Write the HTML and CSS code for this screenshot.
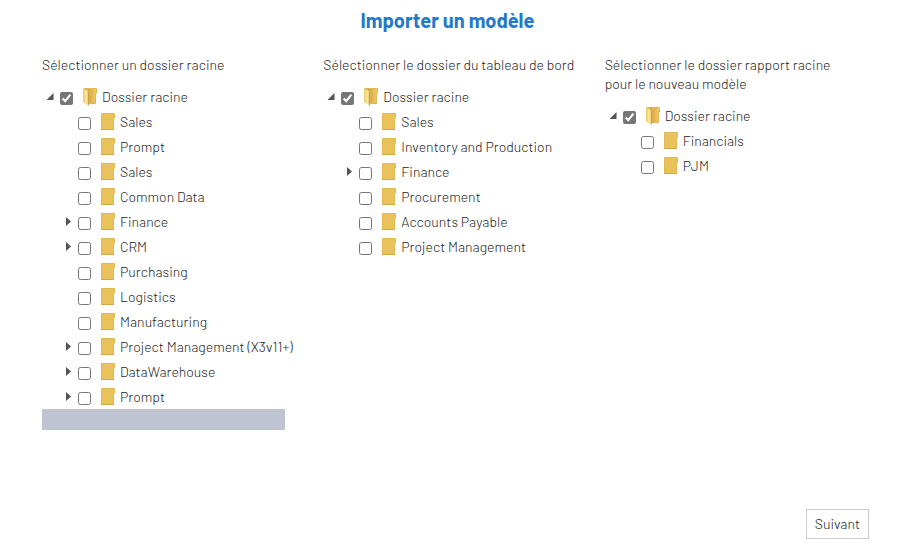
FILE: index.html
```html
<!DOCTYPE html>
<html lang="fr">
<head>
    <meta charset="UTF-8">
    <meta name="viewport" content="width=device-width, initial-scale=1.0">
    <title>Importer un modèle</title>
    <link rel="stylesheet" href="styles.css">
</head>
<body>
    <svg class="defs" width="0" height="0" aria-hidden="true">
        <defs>
            <linearGradient id="flap" x1="0" x2="1">
                <stop offset="0" stop-color="#e9c85f"/>
                <stop offset="0.6" stop-color="#fbe9a4"/>
                <stop offset="1" stop-color="#e5c35c"/>
            </linearGradient>
            <linearGradient id="back" x1="0" x2="1">
                <stop offset="0.3" stop-color="#d5a646"/>
                <stop offset="1" stop-color="#f0cd68"/>
            </linearGradient>
        </defs>
        <symbol id="folder" viewBox="0 0 14 17">
            <path d="M0.5 0.5H13.5V5L12.5 6V16.5H0.5Z" fill="#e9c25c"/>
            <path d="M0.5 16.5V0.5H13.5V5L12.5 6V16" fill="none" stroke="#e2b851"/>
            <path d="M0 16.5H13" stroke="#d3a647"/>
        </symbol>
        <symbol id="folder-open" viewBox="0 0 14 18">
            <path d="M1 0.5H13.5V5L12.5 6V15.5H3Z" fill="url(#back)" stroke="#e0b750"/>
            <path d="M0 0.5L4.5 2.5Q5.5 3 5.5 4V17.5L1 15Q0 14.5 0 13Z" fill="url(#flap)"/>
            <path d="M5.5 4V17.5" stroke="#d0a040"/>
        </symbol>
        <symbol id="expanded" viewBox="0 0 8 8">
            <path d="M7.5 0.5V7.5H0.5Z" fill="#555"/>
        </symbol>
        <symbol id="collapsed" viewBox="0 0 8 9">
            <path d="M2 0L7 4.5L2 9Z" fill="#555"/>
        </symbol>
    </svg>

    <h1>Importer un modèle</h1>

    <form class="import">
        <div class="columns">
            <section>
                <h2>Sélectionner un dossier racine</h2>
                <ul class="tree">
                    <li>
                        <div class="node">
                            <button type="button" class="toggle" aria-label="Réduire"><svg><use href="#expanded"/></svg></button>
                            <label><input type="checkbox" checked><svg class="folder open"><use href="#folder-open"/></svg>Dossier racine</label>
                        </div>
                        <ul>
                            <li class="node"><label><input type="checkbox"><svg class="folder"><use href="#folder"/></svg>Sales</label></li>
                            <li class="node"><label><input type="checkbox"><svg class="folder"><use href="#folder"/></svg>Prompt</label></li>
                            <li class="node"><label><input type="checkbox"><svg class="folder"><use href="#folder"/></svg>Sales</label></li>
                            <li class="node"><label><input type="checkbox"><svg class="folder"><use href="#folder"/></svg>Common Data</label></li>
                            <li class="node">
                                <button type="button" class="toggle" aria-label="Développer"><svg><use href="#collapsed"/></svg></button>
                                <label><input type="checkbox"><svg class="folder"><use href="#folder"/></svg>Finance</label>
                            </li>
                            <li class="node">
                                <button type="button" class="toggle" aria-label="Développer"><svg><use href="#collapsed"/></svg></button>
                                <label><input type="checkbox"><svg class="folder"><use href="#folder"/></svg>CRM</label>
                            </li>
                            <li class="node"><label><input type="checkbox"><svg class="folder"><use href="#folder"/></svg>Purchasing</label></li>
                            <li class="node"><label><input type="checkbox"><svg class="folder"><use href="#folder"/></svg>Logistics</label></li>
                            <li class="node"><label><input type="checkbox"><svg class="folder"><use href="#folder"/></svg>Manufacturing</label></li>
                            <li class="node">
                                <button type="button" class="toggle" aria-label="Développer"><svg><use href="#collapsed"/></svg></button>
                                <label><input type="checkbox"><svg class="folder"><use href="#folder"/></svg>Project Management (X3v11+)</label>
                            </li>
                            <li class="node">
                                <button type="button" class="toggle" aria-label="Développer"><svg><use href="#collapsed"/></svg></button>
                                <label><input type="checkbox"><svg class="folder"><use href="#folder"/></svg>DataWarehouse</label>
                            </li>
                            <li class="node">
                                <button type="button" class="toggle" aria-label="Développer"><svg><use href="#collapsed"/></svg></button>
                                <label><input type="checkbox"><svg class="folder"><use href="#folder"/></svg>Prompt</label>
                            </li>
                        </ul>
                    </li>
                </ul>
                <div class="scrollbar"></div>
            </section>

            <section>
                <h2>Sélectionner le dossier du tableau de bord</h2>
                <ul class="tree">
                    <li>
                        <div class="node">
                            <button type="button" class="toggle" aria-label="Réduire"><svg><use href="#expanded"/></svg></button>
                            <label><input type="checkbox" checked><svg class="folder open"><use href="#folder-open"/></svg>Dossier racine</label>
                        </div>
                        <ul>
                            <li class="node"><label><input type="checkbox"><svg class="folder"><use href="#folder"/></svg>Sales</label></li>
                            <li class="node"><label><input type="checkbox"><svg class="folder"><use href="#folder"/></svg>Inventory and Production</label></li>
                            <li class="node">
                                <button type="button" class="toggle" aria-label="Développer"><svg><use href="#collapsed"/></svg></button>
                                <label><input type="checkbox"><svg class="folder"><use href="#folder"/></svg>Finance</label>
                            </li>
                            <li class="node"><label><input type="checkbox"><svg class="folder"><use href="#folder"/></svg>Procurement</label></li>
                            <li class="node"><label><input type="checkbox"><svg class="folder"><use href="#folder"/></svg>Accounts Payable</label></li>
                            <li class="node"><label><input type="checkbox"><svg class="folder"><use href="#folder"/></svg>Project Management</label></li>
                        </ul>
                    </li>
                </ul>
            </section>

            <section>
                <h2>Sélectionner le dossier rapport racine pour le nouveau modèle</h2>
                <ul class="tree">
                    <li>
                        <div class="node">
                            <button type="button" class="toggle" aria-label="Réduire"><svg><use href="#expanded"/></svg></button>
                            <label><input type="checkbox" checked><svg class="folder open"><use href="#folder-open"/></svg>Dossier racine</label>
                        </div>
                        <ul>
                            <li class="node"><label><input type="checkbox"><svg class="folder"><use href="#folder"/></svg>Financials</label></li>
                            <li class="node"><label><input type="checkbox"><svg class="folder"><use href="#folder"/></svg>PJM</label></li>
                        </ul>
                    </li>
                </ul>
            </section>
        </div>

        <div class="actions">
            <button type="button" class="next">Suivant</button>
        </div>
    </form>
</body>
</html>
```

FILE: styles.css
```css
* {
    box-sizing: border-box;
}
body {
    display: flex;
    flex-direction: column;
    min-height: 100vh;
    margin: 0;
    font-family: Barlow, Roboto, sans-serif;
    font-size: 14px;
    font-weight: 300;
    line-height: 19px;
    color: #222;
    background-color: #fff;
}
.defs {
    position: absolute;
}
h1 {
    margin: 7px 15px 0 0;
    font-size: 20px;
    line-height: 26px;
    font-weight: 700;
    text-align: center;
    color: #2479c7;
}
.import {
    display: flex;
    flex-direction: column;
    flex: 1;
    padding: 22px 41px 5px 42px;
}
.columns {
    display: grid;
    grid-template-columns: repeat(3, minmax(0, 1fr));
    gap: 27px;
    padding-right: 10px;
}
h2 {
    margin: 0 0 10px;
    font-size: 14px;
    line-height: 19px;
    font-weight: 300;
}
.tree, .tree ul {
    margin: 0;
    padding: 0;
    list-style: none;
}
.tree ul {
    padding-left: 18px;
}
.node {
    display: flex;
    align-items: center;
    height: 25px;
    padding-left: 18px;
    white-space: nowrap;
}
.toggle {
    display: flex;
    flex: none;
    width: 14px;
    margin-left: -14px;
    padding: 0;
    border: none;
    background: none;
    cursor: pointer;
}
.toggle svg {
    width: 8px;
    height: 9px;
}
.node label {
    display: flex;
    flex: none;
    align-items: center;
}
.node input {
    width: 13px;
    height: 13px;
    margin: 3px 10px 0 0;
    accent-color: #767676;
}
.folder {
    width: 14px;
    height: 17px;
    margin-right: 5px;
}
.folder.open {
    height: 18px;
}
.scrollbar {
    height: 21px;
    margin-right: 11px;
    background-color: #c0c3d2;
}
.actions {
    display: flex;
    justify-content: flex-end;
    margin-top: auto;
}
.next {
    height: 30px;
    padding: 0 8px 2px;
    border: 1px solid #ccc;
    background-color: #fff;
    font-family: inherit;
    font-size: 14px;
    font-weight: 300;
    color: #222;
    cursor: pointer;
}
```
